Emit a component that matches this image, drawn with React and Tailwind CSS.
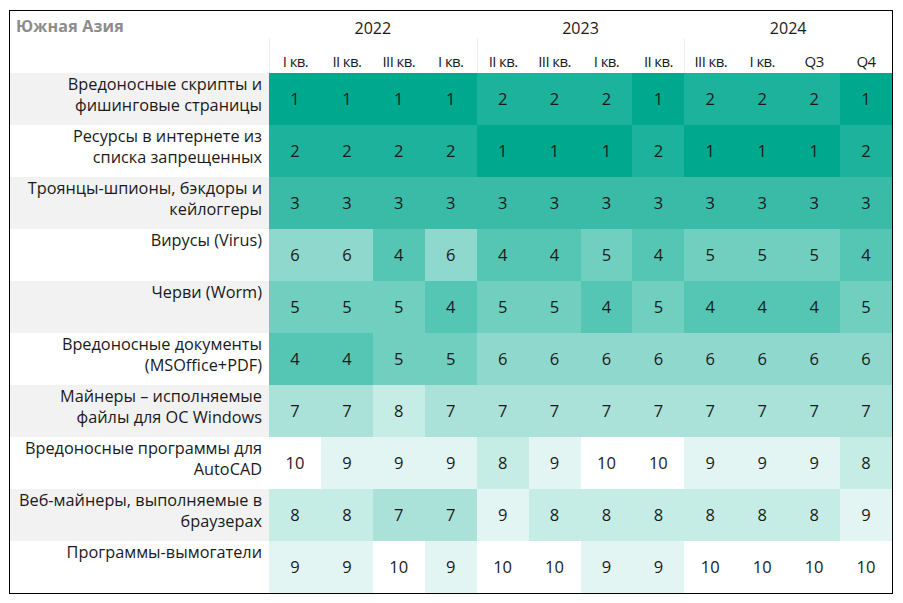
import React from 'react'

const shades = {
  1: 'bg-[#00a88e]',
  2: 'bg-[#1cb29b]',
  3: 'bg-[#39bba7]',
  4: 'bg-[#55c5b4]',
  5: 'bg-[#71cfc0]',
  6: 'bg-[#8ed8cd]',
  7: 'bg-[#aae2d9]',
  8: 'bg-[#c6ece6]',
  9: 'bg-[#e3f5f2]',
  10: 'bg-white',
}

const years = ['2022', '2023', '2024']
const quarters = ['I кв.', 'II кв.', 'III кв.', 'I кв.', 'II кв.', 'III кв.', 'I кв.', 'II кв.', 'III кв.', 'I кв.', 'Q3', 'Q4']

const rows = [
  { name: ['Вредоносные скрипты и', 'фишинговые страницы'], v: [1, 1, 1, 1, 2, 2, 2, 1, 2, 2, 2, 1] },
  { name: ['Ресурсы в интернете из', 'списка запрещенных'], v: [2, 2, 2, 2, 1, 1, 1, 2, 1, 1, 1, 2] },
  { name: ['Троянцы-шпионы, бэкдоры и', 'кейлоггеры'], v: [3, 3, 3, 3, 3, 3, 3, 3, 3, 3, 3, 3] },
  { name: ['Вирусы (Virus)'], v: [6, 6, 4, 6, 4, 4, 5, 4, 5, 5, 5, 4] },
  { name: ['Черви (Worm)'], v: [5, 5, 5, 4, 5, 5, 4, 5, 4, 4, 4, 5] },
  { name: ['Вредоносные документы', '(MSOffice+PDF)'], v: [4, 4, 5, 5, 6, 6, 6, 6, 6, 6, 6, 6] },
  { name: ['Майнеры – исполняемые', 'файлы для ОС Windows'], v: [7, 7, 8, 7, 7, 7, 7, 7, 7, 7, 7, 7] },
  { name: ['Вредоносные программы для', 'AutoCAD'], v: [10, 9, 9, 9, 8, 9, 10, 10, 9, 9, 9, 8] },
  { name: ['Веб-майнеры, выполняемые в', 'браузерах'], v: [8, 8, 7, 7, 9, 8, 8, 8, 8, 8, 8, 9] },
  { name: ['Программы-вымогатели'], v: [9, 9, 10, 9, 10, 10, 9, 9, 10, 10, 10, 10] },
]

export default function App() {
  return (
    <div className="w-[903px] h-[603px] bg-white pl-[9px] pt-[10px] font-['Open_Sans',sans-serif] text-[#1a1a1a]">
      <div className="w-[884px] border border-black">
        <div className="grid grid-cols-[259px_repeat(12,1fr)]">
          {/* header: years */}
          <div className="h-[27px] pl-[6px] pt-[5px] text-[16px] font-bold text-[#8c8c8c] leading-[20px] tracking-[0.2px]">Южная Азия</div>
          {years.map(y => (
            <div key={y} className="col-span-4 h-[27px] text-center text-[16px] leading-[20px] pt-[7px] font-medium">{y}</div>
          ))}
          {/* header: quarters */}
          <div className="h-[35px]" />
          {quarters.map((q, i) => (
            <div
              key={i}
              className={`h-[35px] flex items-end justify-center pb-[1px] text-[15px] tracking-[-0.6px] font-medium whitespace-nowrap ${i % 4 === 0 ? 'border-l border-[#eeeeee]' : ''}`}
            >
              {q}
            </div>
          ))}
          {/* body */}
          {rows.map((r, ri) => (
            <React.Fragment key={ri}>
              <div className={`h-[52px] pr-[7px] pt-[1px] text-right text-[16.3px] leading-[21px] ${ri % 2 === 0 ? 'bg-[#f2f2f2]' : 'bg-white'}`}>
                {r.name.map((l, li) => <div key={li}>{l}</div>)}
              </div>
              {r.v.map((n, ci) => (
                <div key={ci} className={`h-[52px] flex items-center justify-center text-[16.5px] ${shades[n]}`}>
                  {n}
                </div>
              ))}
            </React.Fragment>
          ))}
        </div>
      </div>
    </div>
  )
}
